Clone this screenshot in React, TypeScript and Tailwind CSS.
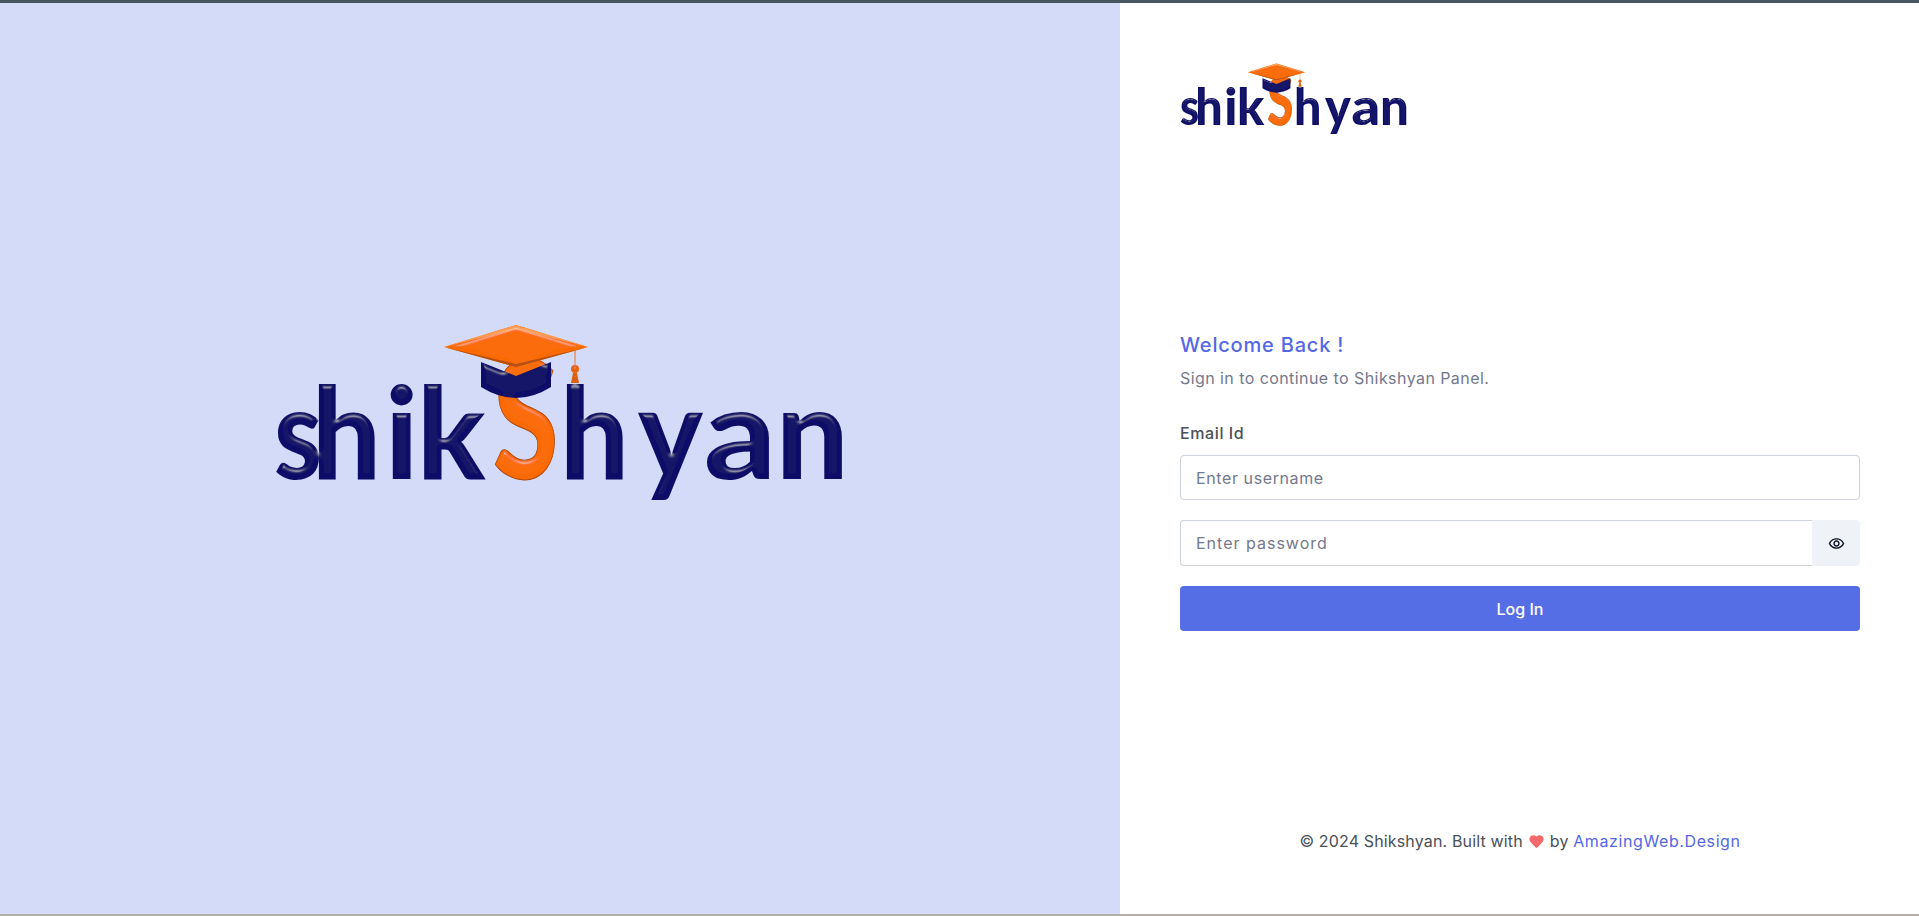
import { MdFavorite, MdOutlineRemoveRedEye } from 'react-icons/md';

const letters = [
  { c: 's', x: 274, sx: 0.85 },
  { c: 'h', x: 312, sx: 0.95 },
  { c: 'i', x: 385, sx: 1 },
  { c: 'k', x: 417, sx: 0.98 },
  { c: 'h', x: 560, sx: 0.95 },
  { c: 'y', x: 638, sx: 0.95 },
  { c: 'a', x: 704, sx: 1.1 },
  { c: 'n', x: 776, sx: 1 },
];

function Logo({ id, className }: { id: string; className: string }) {
  return (
    <svg viewBox="272 320 576 276" className={className} role="img" aria-label="Shikshyan logo">
      <defs>
        <filter id={`${id}-bevel`} x="-5%" y="-5%" width="110%" height="110%">
          <feGaussianBlur in="SourceAlpha" stdDeviation="2" result="blur" />
          <feSpecularLighting in="blur" surfaceScale="5" specularConstant="0.7" specularExponent="30" lightingColor="#ffffff" result="spec">
            <feDistantLight azimuth="270" elevation="30" />
          </feSpecularLighting>
          <feComposite in="spec" in2="SourceAlpha" operator="in" result="specIn" />
          <feComposite in="SourceGraphic" in2="specIn" operator="arithmetic" k1="0" k2="1" k3="0.4" k4="0" />
        </filter>
      </defs>
      <g filter={`url(#${id}-bevel)`} fontFamily="Lato, sans-serif" fontWeight={900} fontSize={128} fill="#0b0b68">
        {letters.map((l, i) => (
          <text key={i} transform={`translate(${l.x} 478) scale(${l.sx} 1)`}>
            {l.c}
          </text>
        ))}
        <text transform="translate(493 478) scale(0.72 1)" fontSize={165} fontWeight={900} fill="#fb6a00" stroke="#a8450c" strokeWidth={1}>
          S
        </text>
        <path d="M481 361 L516 375 L551 361 V386 Q516 408 481 386 Z" fill="#0b0b68" />
        <path d="M516 324 L588 346 L516 366 L444 346 Z" fill="#fb6a00" />
        <path d="M516 324 L588 346 L516 328 L444 346 Z" fill="#ff9a50" />
        <path d="M444 346 L516 366 L588 346 L516 363 Z" fill="#b4500f" />
        <path d="M575 348 V368" stroke="#e8700f" strokeWidth={1} fill="none" />
        <circle cx="575" cy="368" r="4" fill="#e8640a" />
        <path d="M573 372 H577 L579 382 H571 Z" fill="#d9600b" />
      </g>
    </svg>
  );
}

export default function App() {
  return (
    <div className="flex h-[916px] flex-col overflow-hidden bg-white font-['Inter',sans-serif]">
      <div className="h-[3px] bg-[#47565f]" />
      <main className="flex flex-1">
        <section className="flex w-[1120px] items-center justify-center bg-[#d4dbf9]">
          <Logo id="hero" className="w-[576px]" />
        </section>
        <section className="flex flex-1 flex-col pb-[61px] pl-[60px] pr-[59px] pt-[59px]">
          <Logo id="small" className="-ml-px h-[110px] w-[230px]" />
          <div className="mt-[158px] flex flex-col">
            <h1 className="text-[20px] font-medium leading-[30px] tracking-[0.8px] text-[#5468e6]">Welcome Back !</h1>
            <p className="mt-[6px] text-[16px] leading-[24px] tracking-[0.43px] text-[#74788d]">Sign in to continue to Shikshyan Panel.</p>
            <label className="mt-[31px] text-[16px] font-medium leading-[24px] tracking-[0.6px] text-[#495057]">Email Id</label>
            <input
              className="mt-[10px] h-[45px] w-full rounded border border-[#ced4da] px-[15px] text-[16px] tracking-[0.6px] outline-none placeholder:text-[#74788d]"
              placeholder="Enter username"
            />
            <div className="mt-[20px] flex h-[46px]">
              <input
                className="flex-1 rounded-l border border-r-0 border-[#ced4da] px-[15px] text-[16px] tracking-[1px] outline-none placeholder:text-[#74788d]"
                placeholder="Enter password"
              />
              <button className="flex w-[48px] items-center justify-center rounded-r bg-[#eff2f7] text-[#111827]">
                <MdOutlineRemoveRedEye size={17} />
              </button>
            </div>
            <button className="mt-[20px] h-[45px] w-full rounded bg-[#556ee6] text-[16px] font-medium text-white">Log In</button>
          </div>
          <footer className="mt-auto flex items-center justify-center gap-[5px] text-[16px] leading-[24px] tracking-[0.15px] text-[#495057]">
            <span>© 2024 Shikshyan. Built with</span>
            <MdFavorite size={17} className="text-[#f46a6a]" />
            <span>
              by <a className="tracking-[0.6px] text-[#5468e6]">AmazingWeb.Design</a>
            </span>
          </footer>
        </section>
      </main>
      <div className="h-[2px] bg-[#b4b0a8]" />
    </div>
  );
}
